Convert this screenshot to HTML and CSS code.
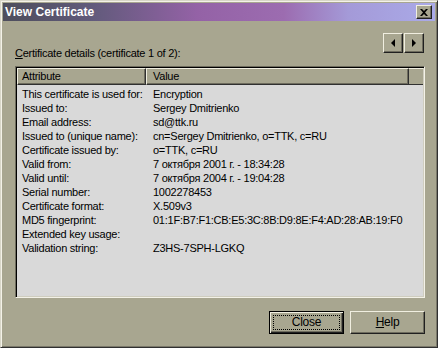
FILE: index.html
```html
<!DOCTYPE html>
<html>
<head>
<meta charset="utf-8">
<link rel="stylesheet" href="styles.css">
</head>
<body>
<div class="window">
  <div class="titlebar">
    <span class="title">View Certificate</span>
    <span class="tclose"><svg width="8" height="7" viewBox="0 0 8 7"><path d="M0 0h2l2 2 2-2h2L5 3.5 8 7H6L4 5 2 7H0l3-3.5z" fill="#000"/></svg></span>
  </div>
  <div class="content">
    <div class="head">
      <span class="label"><u>C</u>ertificate details (certificate 1 of 2):</span>
      <div class="nav">
        <span class="navbtn"><svg width="4" height="8" viewBox="0 0 4 8"><path d="M4 0v8L0 4z" fill="#000"/></svg></span>
        <span class="navbtn"><svg width="4" height="8" viewBox="0 0 4 8"><path d="M0 0v8l4-4z" fill="#000"/></svg></span>
      </div>
    </div>
    <div class="list">
      <div class="lhead">
        <span class="hcell c1">Attribute</span>
        <span class="hcell c2">Value</span>
        <span class="hfill"></span>
      </div>
      <div class="rows">
        <span class="a">This certificate is used for:</span><span class="v">Encryption</span>
        <span class="a">Issued to:</span><span class="v">Sergey Dmitrienko</span>
        <span class="a">Email address:</span><span class="v">sd@ttk.ru</span>
        <span class="a">Issued to (unique name):</span><span class="v">cn=Sergey Dmitrienko, o=TTK, c=RU</span>
        <span class="a">Certificate issued by:</span><span class="v">o=TTK, c=RU</span>
        <span class="a">Valid from:</span><span class="v">7 октября 2001 г. - 18:34:28</span>
        <span class="a">Valid until:</span><span class="v">7 октября 2004 г. - 19:04:28</span>
        <span class="a">Serial number:</span><span class="v">1002278453</span>
        <span class="a">Certificate format:</span><span class="v">X.509v3</span>
        <span class="a">MD5 fingerprint:</span><span class="v">01:1F:B7:F1:CB:E5:3C:8B:D9:8E:F4:AD:28:AB:19:F0</span>
        <span class="a">Extended key usage:</span><span class="v"></span>
        <span class="a">Validation string:</span><span class="v">Z3HS-7SPH-LGKQ</span>
      </div>
    </div>
    <div class="buttons">
      <span class="btn default"><span class="focus">Close</span></span>
      <span class="btn"><span class="focus nofocus"><u>H</u>elp</span></span>
    </div>
  </div>
</div>
</body>
</html>
```
FILE: styles.css
```css
html, body {
  margin: 0;
  padding: 0;
  background: #a8a690;
}
.window {
  box-sizing: border-box;
  width: 438px;
  height: 348px;
  background: #a8a690;
  border: 1px solid;
  border-color: #d8d6c8 #303030 #303030 #d8d6c8;
  box-shadow: inset 1px 1px #f4f2e8, inset -1px -1px #7a786a;
  padding: 2px;
  font-family: "Liberation Sans", Arial, sans-serif;
  font-size: 11px;
  letter-spacing: -0.25px;
  color: #000;
}
.titlebar {
  height: 18px;
  display: flex;
  align-items: center;
  justify-content: space-between;
  background: linear-gradient(90deg, #4e4e5c 0%, #605a7a 20%, #9462a6 45%, #9c6cb0 65%, #a49ad8 80%, #aaaae8 100%);
  padding: 0 3px 0 2px;
}
.title {
  color: #fff;
  font-weight: bold;
  font-size: 12px;
  letter-spacing: 0;
}
.tclose {
  box-sizing: border-box;
  width: 16px;
  height: 14px;
  background: #a8a690;
  border: 1px solid;
  border-color: #f0eee0 #202020 #202020 #f0eee0;
  box-shadow: inset -1px -1px #6e6c5e;
  display: flex;
  align-items: center;
  justify-content: center;
}
.content {
  padding: 0 10px 0 12px;
}
.head {
  height: 27px;
  margin-top: 12px;
  display: flex;
  justify-content: space-between;
  align-items: flex-start;
}
.label {
  margin-top: 14px;
  line-height: 13px;
}
.nav {
  display: flex;
  margin-right: 1px;
  gap: 1px;
}
.navbtn {
  box-sizing: border-box;
  width: 20px;
  height: 20px;
  border: 1px solid;
  border-color: #f0eee0 #202020 #202020 #f0eee0;
  box-shadow: inset -1px -1px #6e6c5e;
  display: flex;
  align-items: center;
  justify-content: center;
}
.list {
  box-sizing: border-box;
  margin-top: 6px;
  height: 232px;
  background: #d9d9d9;
  border: 1px solid;
  border-color: #6e6c5e #f4f2e8 #f4f2e8 #6e6c5e;
  box-shadow: inset 1px 1px #000, inset -1px -1px #cfcdbf;
  padding: 1px;
}
.lhead {
  display: flex;
  height: 17px;
  background: #a8a690;
}
.hcell {
  box-sizing: border-box;
  height: 17px;
  line-height: 15px;
  border: 1px solid;
  border-color: #f0eee0 #303030 #303030 #f0eee0;
  box-shadow: inset -1px -1px #6e6c5e;
}
.c1 {
  width: 129px;
  padding-left: 4px;
}
.c2 {
  width: 263px;
  padding-left: 6px;
}
.hfill {
  flex: 1;
  border-top: 1px solid #f0eee0;
  border-bottom: 1px solid #303030;
  height: 15px;
}
.rows {
  display: grid;
  grid-template-columns: 129px 1fr;
  grid-auto-rows: 14px;
  line-height: 14px;
  padding-top: 2px;
}
.a {
  padding-left: 5px;
  white-space: nowrap;
}
.v {
  padding-left: 7px;
  white-space: nowrap;
}
.buttons {
  margin-top: 13px;
  display: flex;
  justify-content: flex-end;
  gap: 6px;
}
.btn {
  box-sizing: border-box;
  width: 75px;
  height: 23px;
  border: 1px solid;
  border-color: #f0eee0 #202020 #202020 #f0eee0;
  box-shadow: inset -1px -1px #6e6c5e;
  display: flex;
  padding: 3px;
}
.btn.default {
  border: 1px solid #000;
  box-shadow: inset 1px 1px #f0eee0, inset -1px -1px #202020, inset -2px -2px #6e6c5e;
}
.focus {
  flex: 1;
  display: flex;
  align-items: center;
  justify-content: center;
  outline: 1px dotted #000;
  outline-offset: -1px;
  line-height: 13px;
  font-size: 12px;
}
.nofocus {
  outline: none;
}
```
